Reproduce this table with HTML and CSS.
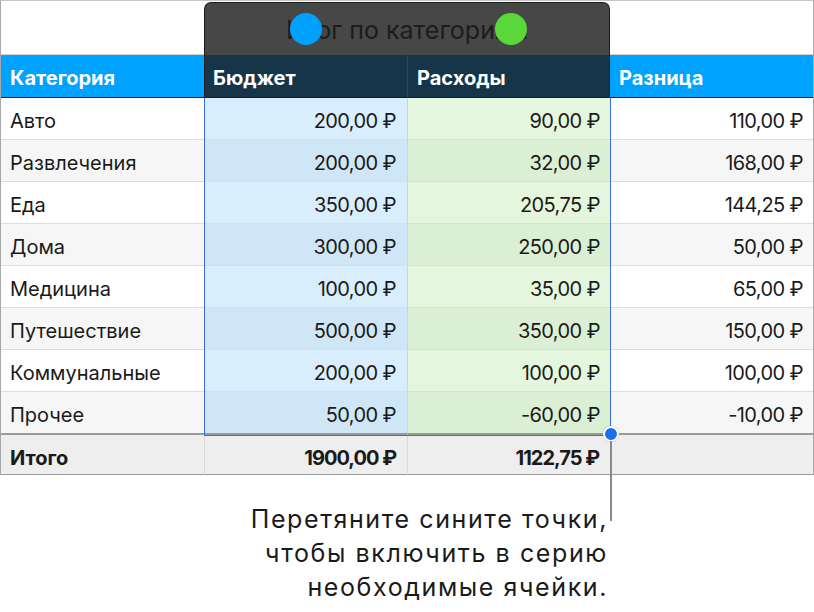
FILE: index.html
```html
<!DOCTYPE html>
<html lang="ru">
<head>
<meta charset="utf-8">
<link rel="stylesheet" href="styles.css">
</head>
<body>
<div class="page">
  <div class="sheet">
    <div class="topband"></div>
    <div class="grid">
      <div class="hd">Категория</div>
      <div class="hd dark">Бюджет</div>
      <div class="hd dark dsep">Расходы</div>
      <div class="hd">Разница</div>

      <div class="c name">Авто</div><div class="c num b">200,00 ₽</div><div class="c num g">90,00 ₽</div><div class="c num">110,00 ₽</div>
      <div class="c name alt">Развлечения</div><div class="c num b alt">200,00 ₽</div><div class="c num g alt">32,00 ₽</div><div class="c num alt">168,00 ₽</div>
      <div class="c name">Еда</div><div class="c num b">350,00 ₽</div><div class="c num g">205,75 ₽</div><div class="c num">144,25 ₽</div>
      <div class="c name alt">Дома</div><div class="c num b alt">300,00 ₽</div><div class="c num g alt">250,00 ₽</div><div class="c num alt">50,00 ₽</div>
      <div class="c name">Медицина</div><div class="c num b">100,00 ₽</div><div class="c num g">35,00 ₽</div><div class="c num">65,00 ₽</div>
      <div class="c name alt">Путешествие</div><div class="c num b alt">500,00 ₽</div><div class="c num g alt">350,00 ₽</div><div class="c num alt">150,00 ₽</div>
      <div class="c name">Коммунальные</div><div class="c num b">200,00 ₽</div><div class="c num g">100,00 ₽</div><div class="c num">100,00 ₽</div>
      <div class="c name alt">Прочее</div><div class="c num b alt">50,00 ₽</div><div class="c num g alt">-60,00 ₽</div><div class="c num alt">-10,00 ₽</div>

      <div class="t name">Итого</div><div class="t num">1900,00 ₽</div><div class="t num">1122,75 ₽</div><div class="t num"></div>
    </div>

    <div class="chart-tab">
      <div class="chart-title">Итог по категориям</div>
      <span class="dot dot-blue"></span>
      <span class="dot dot-green"></span>
    </div>
    <div class="selection"></div>
    <span class="handle"></span>
    <span class="leader"></span>
  </div>
  <p class="caption">Перетяните сините точки,<br>чтобы включить в серию<br>необходимые ячейки.</p>
</div>
</body>
</html>
```
FILE: styles.css
```css
html, body {
  margin: 0;
  padding: 0;
  background: #ffffff;
}
.page {
  width: 814px;
  height: 612px;
  overflow: hidden;
  font-family: Inter, "Liberation Sans", Arial, sans-serif;
  color: #1a1a1a;
}
.sheet {
  position: relative;
  width: 812px;
  border-left: 1px solid #a8a8a8;
  border-right: 1px solid #a8a8a8;
  border-top: 1px solid #c4c4c4;
}
.topband {
  height: 53px;
  border-bottom: 1px solid #d4d4d4;
}
.grid {
  display: grid;
  grid-template-columns: 203px 203px 203px 1fr;
}
.hd {
  height: 43px;
  background: #00a2ff;
  color: #ffffff;
  font-weight: 700;
  font-size: 20px;
  line-height: 24px;
  display: flex;
  align-items: center;
  padding-left: 9px;
  padding-top: 3px;
  border-bottom: 1px solid #1a1a1a;
  box-sizing: border-box;
}
.hd.dark {
  background: #163548;
}
.hd.dark.dsep {
  border-left: 1px solid #2a4656;
  padding-left: 9px;
}
.c {
  height: 42px;
  box-sizing: border-box;
  border-bottom: 1px solid #dddddd;
  display: flex;
  align-items: center;
  font-size: 20px;
  line-height: 24px;
  padding-top: 5px;
  background: #ffffff;
}
.c.alt { background: #f6f6f6; }
.name { padding-left: 9px; }
.num {
  justify-content: flex-end;
  padding-right: 10px;
  letter-spacing: -0.6px;
}
.c.b { background: #d8eefd; padding-right: 11px; }
.c.b.alt { background: #cfe6f6; }
.c.g {
  background: #e4f6dd;
  border-left: 1px solid #c9d9c6;
  padding-right: 10px;
}
.c.g.alt { background: #dbefd4; }
.t {
  height: 42px;
  box-sizing: border-box;
  background: #eeeeee;
  border-top: 2px solid #9a9a9a;
  border-bottom: 1px solid #9a9a9a;
  display: flex;
  align-items: center;
  font-size: 20px;
  line-height: 24px;
  padding-top: 7px;
  font-weight: 700;
  margin-top: -1px;
}
.t + .t { border-left: 1px solid #dadada; }
.t.num { padding-right: 11px; letter-spacing: -1px; }

.chart-tab {
  position: absolute;
  left: 203px;
  top: 1px;
  width: 406px;
  height: 96px;
  box-sizing: border-box;
  border: 1px solid #1b1b1b;
  border-bottom: none;
  border-radius: 7px 7px 0 0;
  background: linear-gradient(#474747 0, #474747 52px, transparent 52px);
}
.chart-title {
  height: 52px;
  display: flex;
  align-items: center;
  justify-content: center;
  font-size: 25px;
  line-height: 30px;
  padding-top: 2px;
  box-sizing: border-box;
  color: #1c1c1c;
}
.dot {
  position: absolute;
  top: 10px;
  width: 32px;
  height: 32px;
  border-radius: 50%;
}
.dot-blue { left: 85px; background: #00a0ff; }
.dot-green { left: 290px; background: #5ad83a; }

.selection {
  position: absolute;
  left: 203px;
  top: 97px;
  width: 407px;
  height: 338px;
  box-sizing: border-box;
  border: 1px solid #3a6de0;
  border-top: none;
  pointer-events: none;
}
.handle {
  position: absolute;
  left: 602px;
  top: 425px;
  width: 12px;
  height: 12px;
  border-radius: 50%;
  background: #1a6fe6;
  border: 2px solid #ffffff;
  box-shadow: 0 0 1px rgba(0,0,0,0.4);
}
.leader {
  position: absolute;
  left: 609px;
  top: 440px;
  width: 2px;
  height: 80px;
  background: #8a8a8a;
}
.caption {
  margin: 27px 0 0 0;
  width: 608px;
  text-align: right;
  font-size: 25px;
  letter-spacing: 1.6px;
  line-height: 34px;
  color: #1a1a1a;
}
```
